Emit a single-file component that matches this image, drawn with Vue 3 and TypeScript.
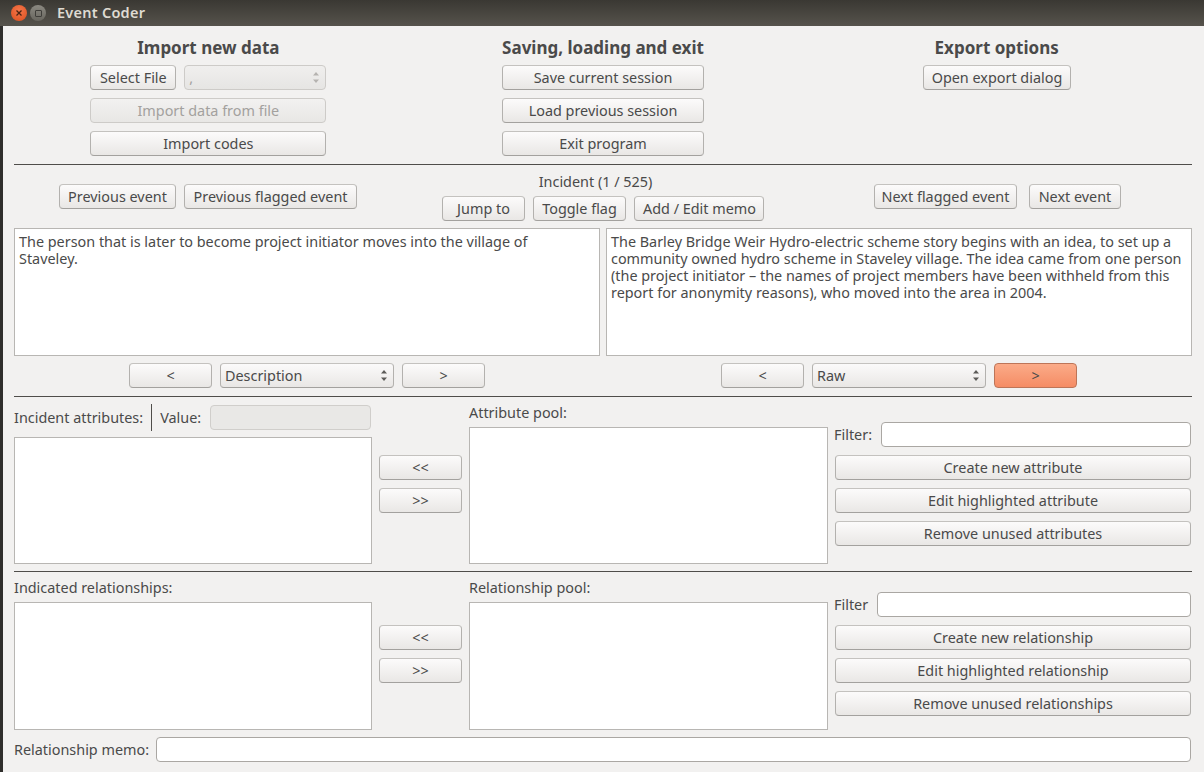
<script setup lang="ts">
interface PoolSection {
  pool: string
  filter: string
  actions: string[]
}

const attributes: PoolSection = {
  pool: 'Attribute pool:',
  filter: 'Filter:',
  actions: ['Create new attribute', 'Edit highlighted attribute', 'Remove unused attributes']
}

const relationships: PoolSection = {
  pool: 'Relationship pool:',
  filter: 'Filter',
  actions: ['Create new relationship', 'Edit highlighted relationship', 'Remove unused relationships']
}

const leftText = 'The person that is later to become project initiator moves into the village of Staveley.'
const rightText =
  'The Barley Bridge Weir Hydro-electric scheme story begins with an idea, to set up a community owned hydro scheme in Staveley village. The idea came from one person (the project initiator – the names of project members have been withheld from this report for anonymity reasons), who moved into the area in 2004.'
</script>

<template>
  <div class="window">
    <header class="titlebar">
      <span class="dot close">
        <svg width="8" height="8" viewBox="0 0 8 8"><path d="M1.5 1.5l5 5M6.5 1.5l-5 5" stroke="#4a2413" stroke-width="1.3" /></svg>
      </span>
      <span class="dot minimize"><i></i></span>
      <span class="title">Event Coder</span>
    </header>

    <main class="body">
      <!-- top group boxes -->
      <section class="top">
        <div class="top-col import-col">
          <h2>Import new data</h2>
          <div class="file-row">
            <button class="btn select-file">Select File</button>
            <div class="combo disabled">
              <span>,</span>
              <svg width="8" height="13" viewBox="0 0 8 13"><path d="M4 1l3 3.5H1zM4 12L1 8.500h6z" fill="#b5b3b0" /></svg>
            </div>
          </div>
          <button class="btn" disabled>Import data from file</button>
          <button class="btn">Import codes</button>
        </div>
        <div class="top-col session-col">
          <h2>Saving, loading and exit</h2>
          <button class="btn">Save current session</button>
          <button class="btn">Load previous session</button>
          <button class="btn">Exit program</button>
        </div>
        <div class="top-col export-col">
          <h2>Export options</h2>
          <button class="btn">Open export dialog</button>
        </div>
      </section>

      <hr class="rule rule-top" />

      <!-- incident navigation -->
      <section class="nav">
        <div class="nav-side nav-left">
          <button class="btn prev">Previous event</button>
          <button class="btn prev-flag">Previous flagged event</button>
        </div>
        <div class="nav-center">
          <div class="incident">Incident (1 / 525)</div>
          <div class="nav-actions">
            <button class="btn jump">Jump to</button>
            <button class="btn toggle">Toggle flag</button>
            <button class="btn memo">Add / Edit memo</button>
          </div>
        </div>
        <div class="nav-side nav-right">
          <button class="btn next-flag">Next flagged event</button>
          <button class="btn next">Next event</button>
        </div>
      </section>

      <section class="texts">
        <div class="panel">
          <div class="textbox short-wrap">{{ leftText }}</div>
          <div class="source-row">
            <button class="btn arrow">&lt;</button>
            <div class="combo source">
              <span>Description</span>
              <svg width="8" height="13" viewBox="0 0 8 13"><path d="M4 1l3 3.500H1zM4 12L1 8.500h6z" fill="#5c5b58" /></svg>
            </div>
            <button class="btn arrow">&gt;</button>
          </div>
        </div>
        <div class="panel">
          <div class="textbox">{{ rightText }}</div>
          <div class="source-row">
            <button class="btn arrow">&lt;</button>
            <div class="combo source">
              <span>Raw</span>
              <svg width="8" height="13" viewBox="0 0 8 13"><path d="M4 1l3 3.500H1zM4 12L1 8.500h6z" fill="#5c5b58" /></svg>
            </div>
            <button class="btn arrow hot">&gt;</button>
          </div>
        </div>
      </section>

      <hr class="rule rule-mid" />

      <!-- attributes -->
      <section class="pools attrs">
        <div class="list-col">
          <div class="attr-head">
            <span>Incident attributes:</span>
            <i class="vline"></i>
            <span>Value:</span>
            <div class="value-box"></div>
          </div>
          <div class="list"></div>
        </div>
        <div class="move-col">
          <button class="btn">&lt;&lt;</button>
          <button class="btn">&gt;&gt;</button>
        </div>
        <div class="list-col">
          <div class="pool-label">{{ attributes.pool }}</div>
          <div class="list"></div>
        </div>
        <div class="action-col">
          <div class="filter-row">
            <span>{{ attributes.filter }}</span>
            <div class="input"></div>
          </div>
          <button v-for="a in attributes.actions" :key="a" class="btn">{{ a }}</button>
        </div>
      </section>

      <hr class="rule rule-low" />

      <!-- relationships -->
      <section class="pools rels">
        <div class="list-col">
          <div class="pool-label">Indicated relationships:</div>
          <div class="list"></div>
        </div>
        <div class="move-col">
          <button class="btn">&lt;&lt;</button>
          <button class="btn">&gt;&gt;</button>
        </div>
        <div class="list-col">
          <div class="pool-label">{{ relationships.pool }}</div>
          <div class="list"></div>
        </div>
        <div class="action-col">
          <div class="filter-row">
            <span>{{ relationships.filter }}</span>
            <div class="input"></div>
          </div>
          <button v-for="a in relationships.actions" :key="a" class="btn">{{ a }}</button>
        </div>
      </section>

      <div class="memo-row">
        <span>Relationship memo:</span>
        <div class="input"></div>
      </div>
    </main>
  </div>
</template>

<style scoped>
.window {
  width: 1204px;
  height: 772px;
  display: flex;
  flex-direction: column;
  background: #2f2e2c;
  overflow: hidden;
  font-family: "Noto Sans", "Open Sans", sans-serif;
  font-size: 14.4px;
  color: #4a4a4a;
}

.titlebar {
  height: 26px;
  flex: none;
  display: flex;
  align-items: center;
  background: linear-gradient(#3a3833, #56534c);
  padding-left: 11px;
}

.dot {
  width: 16px;
  height: 16px;
  border-radius: 50%;
  display: flex;
  align-items: center;
  justify-content: center;
}

.close {
  background: radial-gradient(circle at 50% 35%, #f5764a, #dc4f1e);
}

.minimize {
  margin-left: 3px;
  background: linear-gradient(#8b8981, #68665f);
}

.minimize i {
  width: 7px;
  height: 7px;
  border: 1px solid #3f3e3a;
  border-radius: 1px;
  box-sizing: border-box;
}

.title {
  margin: -2px 0 0 11px;
  color: #dfdbd2;
  font-weight: 600;
  font-size: 14.5px;
  letter-spacing: 0.25px;
}

.body {
  flex: 1;
  margin-left: 3px;
  background: #f2f1f0;
  padding: 0 12px 0 11px;
  display: flex;
  flex-direction: column;
}

.btn {
  display: block;
  height: 25px;
  padding: 0 8px;
  box-sizing: border-box;
  border: 1px solid;
  border-color: #c4c2bf #b3b1ae #a3a19e;
  border-radius: 4px;
  background: linear-gradient(#fcfbfb, #e9e7e5);
  font: inherit;
  line-height: 21px;
  color: #4a4a4a;
  white-space: nowrap;
}

.btn:disabled {
  color: #a3a19e;
  border-color: #cdcbc8;
  background: linear-gradient(#f2f1f0, #e8e7e5);
}

.top {
  display: grid;
  grid-template-columns: repeat(3, 1fr);
  height: 130px;
  padding-top: 13px;
  box-sizing: border-box;
}

.top-col {
  display: flex;
  flex-direction: column;
  gap: 8px;
}

.top-col h2 {
  margin: 0;
  height: 18px;
  line-height: 18px;
  font-size: 17px;
  font-weight: 700;
  white-space: nowrap;
}

.import-col {
  width: 236px;
  justify-self: center;
  margin-right: 4px;
  text-align: center;
}

.session-col {
  width: 202px;
  justify-self: center;
  text-align: center;
}

.export-col {
  width: 148px;
  justify-self: center;
  margin-left: 2px;
  text-align: center;
}

.file-row {
  display: flex;
  gap: 8px;
}

.select-file {
  width: 86px;
  padding: 0;
  flex: none;
}

.combo {
  display: flex;
  align-items: center;
  justify-content: space-between;
  height: 25px;
  box-sizing: border-box;
  border: 1px solid;
  border-color: #c4c2bf #b3b1ae #a3a19e;
  border-radius: 4px;
  background: linear-gradient(#fbfafa, #e9e7e5);
  padding: 0 5px 0 4px;
}

.combo.disabled {
  flex: 1;
  border-color: #cdcbc8;
  background: linear-gradient(#f0efee, #e6e5e3);
  color: #a3a19e;
}

.rule {
  margin: 0;
  border: 0;
  height: 1px;
  flex: none;
  background: #4f4d4a;
}

.rule-top {
  margin-top: 8px;
}

.nav {
  display: grid;
  grid-template-columns: 1fr auto 1fr;
  height: 63px;
}

.nav-side {
  display: flex;
  padding-top: 19px;
  align-items: flex-start;
}

.nav-left {
  gap: 8px;
  padding-left: 45px;
}

.nav-right {
  gap: 12px;
  justify-content: flex-end;
  padding-right: 71px;
}

.prev {
  width: 117px;
  padding: 0;
}

.prev-flag {
  width: 173px;
  padding: 0;
}

.next-flag {
  width: 143px;
  padding: 0;
}

.next {
  width: 92px;
  padding: 0;
}

.nav-center {
  display: flex;
  flex-direction: column;
  align-items: center;
}

.incident {
  margin: 7px 15px 0 0;
  height: 24px;
  line-height: 19px;
}

.nav-actions {
  display: flex;
  gap: 8px;
}

.jump {
  width: 83px;
}

.toggle {
  width: 93px;
}

.memo {
  width: 130px;
}

.texts {
  display: grid;
  grid-template-columns: 586px 586px;
  gap: 6px;
}

.panel {
  display: flex;
  flex-direction: column;
  gap: 7px;
}

.textbox {
  height: 128px;
  box-sizing: border-box;
  background: #fff;
  border: 1px solid #b8b6b3;
  padding: 4px;
  line-height: 17px;
}

.short-wrap {
  padding-right: 40px;
}

.source-row {
  display: flex;
  justify-content: center;
  gap: 8px;
}

.arrow {
  width: 83px;
}

.source {
  width: 174px;
}

.hot {
  background: linear-gradient(#fbab88, #f58c65);
  border-color: #bd7558;
}

.rule-mid {
  margin-top: 8px;
}

.pools {
  display: grid;
  grid-template-columns: 358px 97px 359px 1fr;
}

.attrs {
  height: 174px;
}

.rels {
  height: 165px;
}

.list-col {
  display: flex;
  flex-direction: column;
  justify-content: flex-end;
  min-width: 0;
}

.attrs .list-col {
  padding-bottom: 7px;
}

.rels .list-col {
  padding-bottom: 7px;
}

.list {
  background: #fff;
  border: 1px solid #b8b6b3;
  box-sizing: border-box;
}

.attrs .list-col:first-child .list {
  height: 127px;
}

.attrs .list-col:nth-child(3) .list {
  height: 137px;
}

.rels .list {
  height: 128px;
}

.attr-head {
  display: flex;
  align-items: center;
  height: 27px;
  margin-bottom: 6px;
}

.vline {
  width: 1px;
  height: 27px;
  background: #4f4d4a;
  margin: 0 8px;
}

.value-box {
  flex: 1;
  height: 25px;
  margin: 0 1px 0 9px;
  box-sizing: border-box;
  border: 1px solid #d0cecb;
  border-radius: 4px;
  background: #e9e8e6;
}

.pool-label {
  height: 19px;
  line-height: 19px;
  margin-bottom: 5px;
}

.move-col {
  display: flex;
  flex-direction: column;
  align-items: center;
  gap: 8px;
}

.attrs .move-col {
  padding-top: 58px;
}

.rels .move-col {
  padding-top: 53px;
}

.move-col .btn {
  width: 83px;
}

.action-col {
  display: flex;
  flex-direction: column;
  gap: 8px;
  margin-left: 7px;
  margin-right: 1px;
}

.attrs .action-col {
  padding-top: 25px;
}

.rels .action-col {
  padding-top: 20px;
}

.filter-row {
  display: flex;
  align-items: center;
  gap: 9px;
  margin-left: -1px;
}

.input {
  flex: 1;
  height: 25px;
  box-sizing: border-box;
  background: #fff;
  border: 1px solid #aaa7a3;
  border-radius: 4px;
}

.memo-row {
  display: flex;
  align-items: center;
  gap: 7px;
  margin-right: 1px;
}
</style>

<style>
html,
body {
  background: #2f2e2c;
}
</style>
